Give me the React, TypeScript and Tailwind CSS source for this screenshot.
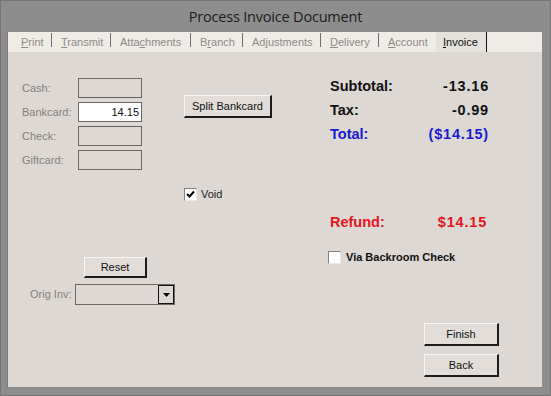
import React from "react";

const tabs = [
	{ pre: "", key: "P", post: "rint", w: "w-[40px]" },
	{ pre: "", key: "T", post: "ransmit", w: "w-[59px]" },
	{ pre: "Atta", key: "c", post: "hments", w: "w-[80px]" },
	{ pre: "B", key: "r", post: "anch", w: "w-[52px]" },
	{ pre: "Ad", key: "j", post: "ustments", w: "w-[78px]" },
	{ pre: "", key: "D", post: "elivery", w: "w-[58px]" },
	{ pre: "", key: "A", post: "ccount", w: "w-[57px]" },
];

const fields = [
	{ label: "Cash:", value: "", active: false },
	{ label: "Bankcard:", value: "14.15", active: true },
	{ label: "Check:", value: "", active: false },
	{ label: "Giftcard:", value: "", active: false },
];

const totals = [
	{ label: "Subtotal:", value: "-13.16", color: "text-[#111]" },
	{ label: "Tax:", value: "-0.99", color: "text-[#111]" },
	{ label: "Total:", value: "($14.15)", color: "text-[#1a1ad2]" },
];

function WinButton({ label, w, h }: { label: string; w: string; h: string }) {
	return (
		<div
			className={`${w} ${h} flex items-center justify-center bg-[#e2ddd8] border-t border-l border-t-[#f7f5f3] border-l-[#f7f5f3] border-b-2 border-r-2 border-b-[#1c1c1c] border-r-[#1c1c1c] text-[11px] text-[#111]`}
		>
			{label}
		</div>
	);
}

function CheckBox({ checked }: { checked: boolean }) {
	return (
		<div className="w-[13px] h-[13px] bg-white border-t border-l border-t-[#808080] border-l-[#808080] border-b border-r border-b-[#e8e8e8] border-r-[#e8e8e8] flex items-center justify-center">
			{checked && (
				<svg width="9" height="9" viewBox="0 0 9 9">
					<path d="M1 4 L3.5 6.5 L8 1.5" fill="none" stroke="#000" strokeWidth="2" />
				</svg>
			)}
		</div>
	);
}

export default function App() {
	return (
		<div className="w-[551px] h-[396px] bg-[#8d8d8d] border border-[#747474] flex flex-col font-['Liberation_Sans',Arial,sans-serif]">
			{/* title bar */}
			<div className="h-[31px] flex items-center justify-center font-['Open_Sans',sans-serif] text-[14.5px] text-[#1c1c1c] tracking-[-0.2px]">
				Process Invoice Document
			</div>

			<div className="ml-[6px] mr-[8px] flex flex-col border-l border-[#7a7a7a]">
				{/* tab strip */}
				<div className="h-[20px] bg-[#efebe7] flex items-stretch pl-[4px] text-[11px]">
					{tabs.map((t) => (
						<div key={t.post} className={`${t.w} flex items-start shrink-0`}>
							<span className="pl-[9px] pt-[2px] flex-1 text-[#8e8a86]">
								{t.pre}
								<u>{t.key}</u>
								{t.post}
							</span>
							{t.key !== "A" && <div className="w-px h-[14px] mt-[1px] bg-[#6f6f6f]" />}
						</div>
					))}
					<div className="w-[51px] shrink-0 bg-[#e5e1dc] border-r border-[#111] pl-[7px] pt-[2px] text-[#111]">
						<u>I</u>nvoice
					</div>
				</div>

				{/* content */}
				<div className="h-[335px] bg-[#ddd8d3] flex text-[11px]">
					{/* left column */}
					<div className="w-[292px] pl-[14px] flex flex-col">
						<div className="flex">
							<div className="mt-[26px] flex flex-col gap-[4px]">
								{fields.map((f) => (
									<div key={f.label} className="flex items-center h-[20px]">
										<span className="w-[56px] text-[#85817d]">{f.label}</span>
										<div
											className={`w-[64px] h-[20px] border border-[#6c6763] flex items-center justify-end pr-[2px] ${
												f.active ? "bg-white text-[#111]" : "bg-[#ddd8d3]"
											}`}
										>
											{f.value}
										</div>
									</div>
								))}
							</div>
							<div className="ml-[42px] mt-[43px]">
								<WinButton label="Split Bankcard" w="w-[88px]" h="h-[23px]" />
							</div>
						</div>

						<div className="mt-[18px] ml-[162px] flex items-center gap-[4px] h-[13px]">
							<CheckBox checked />
							<span className="text-[#222]">Void</span>
						</div>

						<div className="mt-[56px] ml-[62px]">
							<WinButton label="Reset" w="w-[63px]" h="h-[21px]" />
						</div>

						<div className="mt-[6px] ml-[8px] flex items-center">
							<span className="w-[45px] text-[#85817d]">Orig Inv:</span>
							<div className="w-[100px] h-[21px] border border-[#6c6763] flex justify-end">
								<div className="w-[16px] h-full border border-[#111] flex items-center justify-center bg-[#ddd8d3]">
									<svg width="7" height="4" viewBox="0 0 7 4">
										<path d="M0 0 H7 L3.5 4 Z" fill="#000" />
									</svg>
								</div>
							</div>
						</div>
					</div>

					{/* right column */}
					<div className="flex-1 pl-[30px] flex flex-col font-bold text-[14.5px]">
						<div className="mt-[23px] w-[159px] flex flex-col">
							{totals.map((r) => (
								<div key={r.label} className={`h-[24px] flex items-center justify-between ${r.color}`}>
									<span>{r.label}</span>
									<span className="tracking-[0.8px]">{r.value}</span>
								</div>
							))}
						</div>

						<div className="mt-[64px] w-[157px] h-[24px] flex items-center justify-between text-[#e3161e]">
							<span>Refund:</span>
							<span className="tracking-[0.8px]">$14.15</span>
						</div>

						<div className="mt-[16px] -ml-[2px] h-[13px] flex items-center gap-[5px] text-[11px] text-[#111]">
							<CheckBox checked={false} />
							<span>Via Backroom Check</span>
						</div>

						<div className="mt-[59px] ml-[94px] flex flex-col gap-[8px] font-normal">
							<WinButton label="Finish" w="w-[75px]" h="h-[23px]" />
							<WinButton label="Back" w="w-[75px]" h="h-[23px]" />
						</div>
					</div>
				</div>
			</div>
		</div>
	);
}
